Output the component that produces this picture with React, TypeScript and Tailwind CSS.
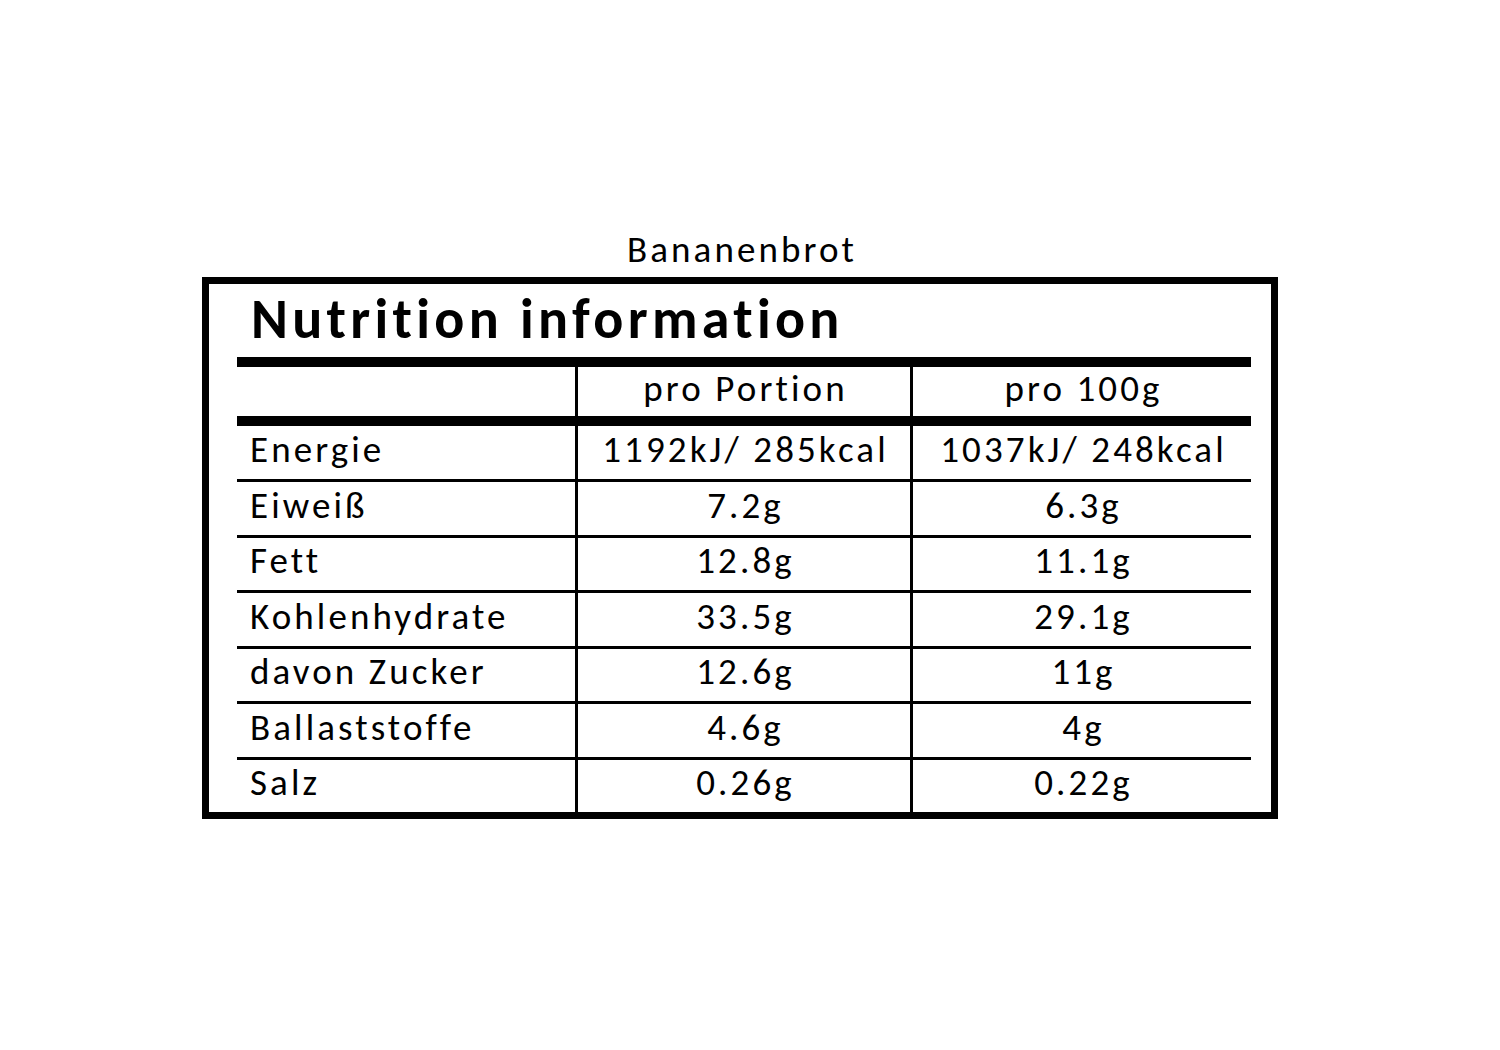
const rows: [string, string, string][] = [
  ['Energie', '1192kJ/ 285kcal', '1037kJ/ 248kcal'],
  ['Eiweiß', '7.2g', '6.3g'],
  ['Fett', '12.8g', '11.1g'],
  ['Kohlenhydrate', '33.5g', '29.1g'],
  ['davon Zucker', '12.6g', '11g'],
  ['Ballaststoffe', '4.6g', '4g'],
  ['Salz', '0.26g', '0.22g'],
]

function Row({ cells, first }: { cells: [string, string, string]; first: boolean }) {
  return (
    <div
      className={
        first
          ? 'grid grid-cols-[338px_335px_341px] h-[53px]'
          : 'grid grid-cols-[338px_335px_341px] h-[55.5px] border-t-[3px] border-black'
      }
    >
      <div className="flex items-center pl-[13px] pb-[6px]">{cells[0]}</div>
      <div className="flex items-center justify-center border-l-[3px] border-black pb-[6px] pl-[3px]">{cells[1]}</div>
      <div className="flex items-center justify-center border-l-[3px] border-black pb-[6px] pl-[3px]">{cells[2]}</div>
    </div>
  )
}

export default function App() {
  return (
    <div className="w-[1500px] h-[1050px] bg-white text-black font-['Calibri','Carlito','Lato',sans-serif] text-[37px] leading-none tracking-[3.1px]">
      <div className="pt-[229px] pl-[202px]">
        <div className="w-[1076px]">
          <div className="h-[48px] flex items-center justify-center pb-[7px] pl-[4px]">Bananenbrot</div>
          <div className="border-[7px] border-black pl-[28px] pr-[20px]">
            <div className="h-[73px] flex items-end pl-[14px] pb-[10px]">
              <h1 className="text-[56px] font-bold leading-none tracking-[4.3px]">Nutrition information</h1>
            </div>
            <div className="h-[10px] bg-black" />
            <div className="grid grid-cols-[338px_335px_341px] h-[49px]">
              <div />
              <div className="flex items-center justify-center border-l-[3px] border-black pb-[6px] pl-[3px]">pro Portion</div>
              <div className="flex items-center justify-center border-l-[3px] border-black pb-[6px] pl-[3px]">pro 100g</div>
            </div>
            <div className="h-[10px] bg-black" />
            {rows.map((r, i) => (
              <Row key={r[0]} cells={r} first={i === 0} />
            ))}
          </div>
        </div>
      </div>
    </div>
  )
}
